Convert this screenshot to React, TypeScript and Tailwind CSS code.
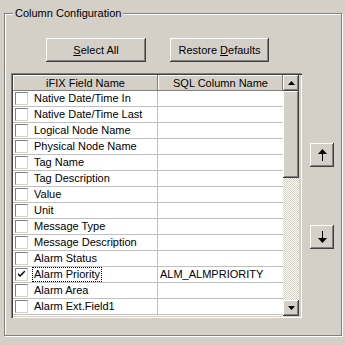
const fields = [
  "Native Date/Time In",
  "Native Date/Time Last",
  "Logical Node Name",
  "Physical Node Name",
  "Tag Name",
  "Tag Description",
  "Value",
  "Unit",
  "Message Type",
  "Message Description",
  "Alarm Status",
  "Alarm Priority",
  "Alarm Area",
  "Alarm Ext.Field1",
];

const raised =
  "bg-[#d4d0c8] shadow-[inset_-1px_-1px_0_#404040,inset_1px_1px_0_#fff,inset_-2px_-2px_0_#808080]";

function TriUp() {
  return (
    <svg width="7" height="4" viewBox="0 0 7 4">
      <path d="M3.5 0 L7 4 L0 4 Z" fill="#000" />
    </svg>
  );
}

function TriDown() {
  return (
    <svg width="7" height="4" viewBox="0 0 7 4">
      <path d="M0 0 L7 0 L3.5 4 Z" fill="#000" />
    </svg>
  );
}

function Arrow({ down }: { down?: boolean }) {
  return (
    <svg width="9" height="12" viewBox="0 0 9 12" className={down ? "rotate-180" : ""}>
      <path d="M4.5 0 L9 5 L0 5 Z" fill="#000" />
      <rect x="4" y="4" width="1" height="8" fill="#000" />
    </svg>
  );
}

function Check({ on }: { on: boolean }) {
  return (
    <div className="w-[13px] h-[13px] bg-white border-l border-t border-[#808080] border-r-[#d4d0c8] border-b-[#d4d0c8] border-r border-b flex items-center justify-center">
      {on && (
        <svg width="7" height="7" viewBox="0 0 7 7">
          <path d="M0 2 L0 4 L2 6 L7 1 L7 -1 L2 4 Z" fill="#000" />
        </svg>
      )}
    </div>
  );
}

export default function App() {
  return (
    <div
      className="w-[345px] h-[345px] bg-[#d4d0c8] overflow-hidden text-[11px] text-black"
      style={{ fontFamily: '"Liberation Sans", Arial, sans-serif' }}
    >
      <div className="relative ml-[4px] mt-[13px] w-[338px] h-[323px] border border-[#808080] shadow-[inset_1px_1px_0_#fff,1px_1px_0_#fff]">
        <div className="absolute left-[8px] top-[-8px] px-[2px] bg-[#d4d0c8] leading-[14px]">
          Column Configuration
        </div>

        <div className="flex gap-[24px] pl-[41px] pt-[24px]">
          <button className={`${raised} w-[100px] h-[24px] flex items-center justify-center`}>
            <span>
              <span className="underline">S</span>elect All
            </span>
          </button>
          <button className={`${raised} w-[99px] h-[24px] flex items-center justify-center`}>
            <span>
              Restore <span className="underline">D</span>efaults
            </span>
          </button>
        </div>

        <div className="flex mt-[11px] ml-[6px]">
          <div className="w-[291px] h-[245px] shadow-[inset_1px_1px_0_#808080,inset_2px_2px_0_#404040,inset_-1px_-1px_0_#fff,inset_-2px_-2px_0_#d4d0c8] p-[2px] flex">
            <div className="w-[270px] bg-white flex flex-col">
              <div className="flex h-[16px] shrink-0">
                <div className="w-[145px] h-[16px] bg-[#d4d0c8] shadow-[inset_-1px_-1px_0_#808080,inset_1px_1px_0_#fff] flex items-center justify-center">
                  iFIX Field Name
                </div>
                <div className="flex-1 h-[16px] bg-[#d4d0c8] shadow-[inset_-1px_-1px_0_#808080,inset_1px_1px_0_#fff] flex items-center justify-center">
                  SQL Column Name
                </div>
              </div>
              {fields.map((f) => {
                const sel = f === "Alarm Priority";
                return (
                  <div key={f} className="flex h-[16px] shrink-0 border-b border-[#c0c0c0]">
                    <div className="w-[145px] border-r border-[#c0c0c0] flex items-center pl-[2px]">
                      <Check on={sel} />
                      <span
                        className={
                          sel
                            ? "ml-[4px] pl-[1px] pr-[1px] h-[15px] leading-[13px] border border-dotted border-black"
                            : "ml-[5px] pl-[1px] leading-[15px]"
                        }
                      >
                        {f}
                      </span>
                    </div>
                    <div className="flex-1 flex items-center pl-[2px] leading-[15px]">
                      {sel ? "ALM_ALMPRIORITY" : ""}
                    </div>
                  </div>
                );
              })}
            </div>
            <div className="w-[16px] flex flex-col">
              <div className={`${raised} h-[16px] flex items-center justify-center`}>
                <TriUp />
              </div>
              <div className={`${raised} h-[87px]`} />
              <div className="flex-1 bg-[repeating-conic-gradient(#d4d0c8_0%_25%,#fff_0%_50%)] bg-[length:2px_2px]" />
              <div className={`${raised} h-[16px] flex items-center justify-center`}>
                <TriDown />
              </div>
            </div>
          </div>

          <div className="ml-[8px] flex flex-col pt-[70px]">
            <button className={`${raised} w-[24px] h-[24px] flex items-center justify-center`}>
              <Arrow />
            </button>
            <button className={`${raised} w-[24px] h-[24px] mt-[58px] flex items-center justify-center`}>
              <Arrow down />
            </button>
          </div>
        </div>
      </div>
    </div>
  );
}
